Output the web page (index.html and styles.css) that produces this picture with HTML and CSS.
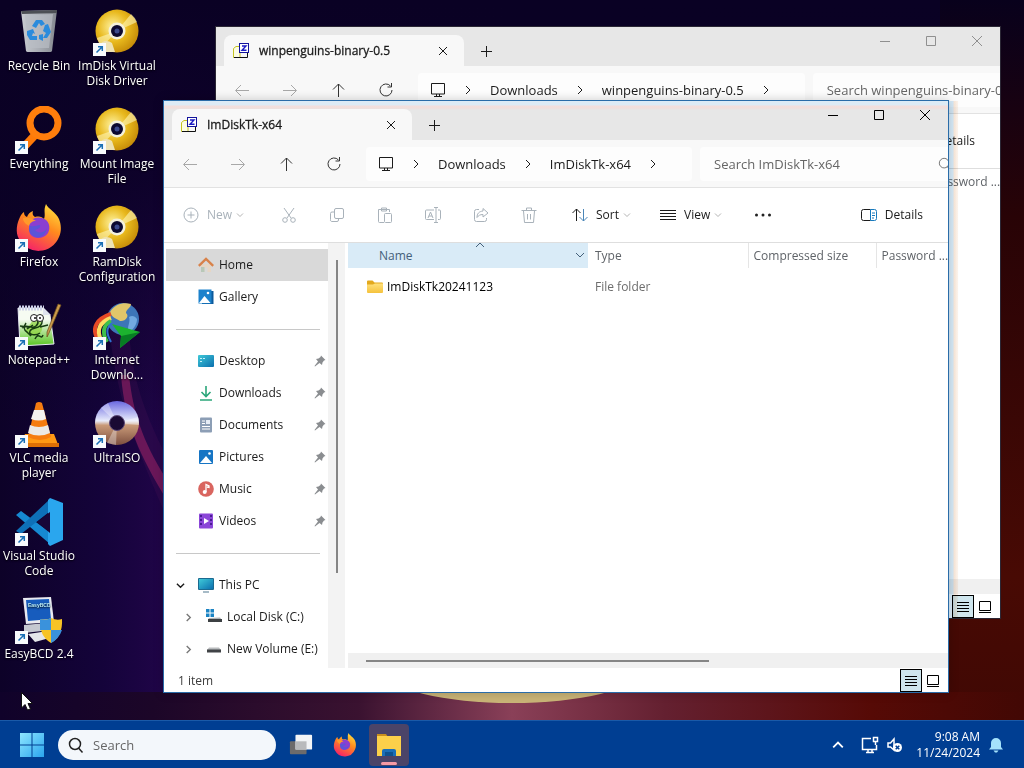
FILE: index.html
```html
<!DOCTYPE html>
<html lang="en">
<head>
    <meta charset="UTF-8">
    <meta name="viewport" content="width=device-width, initial-scale=1.0">
    <title>Desktop</title>
    <link rel="stylesheet" href="styles.css">
</head>
<body>
    <!-- Icon sprite -->
    <svg class="sprite" aria-hidden="true">
        <defs>
            <radialGradient id="gold" cx="40%" cy="40%" r="65%">
                <stop offset="0" stop-color="#fff3a0"/>
                <stop offset=".55" stop-color="#e8b81c"/>
                <stop offset="1" stop-color="#c48a08"/>
            </radialGradient>
            <linearGradient id="fire" x1=".8" y1="0" x2=".3" y2="1">
                <stop offset="0" stop-color="#ffe23e"/>
                <stop offset=".45" stop-color="#ff8a1e"/>
                <stop offset="1" stop-color="#f5206a"/>
            </linearGradient>
            <linearGradient id="silver" x1="0" y1="0" x2="0" y2="1">
                <stop offset="0" stop-color="#6a68e0"/>
                <stop offset=".45" stop-color="#e8ecfb"/>
                <stop offset=".55" stop-color="#c99a78"/>
                <stop offset="1" stop-color="#7d4f3f"/>
            </linearGradient>
            <linearGradient id="bin" x1="0" y1="0" x2="1" y2="0">
                <stop offset="0" stop-color="#c9ccd1"/>
                <stop offset=".5" stop-color="#a9adb4"/>
                <stop offset="1" stop-color="#84888f"/>
            </linearGradient>
            <linearGradient id="winlogo" x1="0" y1="0" x2="1" y2="1">
                <stop offset="0" stop-color="#8fe6ff"/>
                <stop offset="1" stop-color="#2aa5ee"/>
            </linearGradient>
            <linearGradient id="teal" x1="0" y1="0" x2="1" y2="1">
                <stop offset="0" stop-color="#3fc9d8"/>
                <stop offset="1" stop-color="#0b6fae"/>
            </linearGradient>
            <linearGradient id="folder" x1="0" y1="0" x2="0" y2="1">
                <stop offset="0" stop-color="#ffe07a"/>
                <stop offset="1" stop-color="#f5c23c"/>
            </linearGradient>
            <linearGradient id="pad" x1="0" y1="0" x2="0" y2="1">
                <stop offset=".3" stop-color="#f6fbf2"/>
                <stop offset="1" stop-color="#57c41f"/>
            </linearGradient>
        </defs>

        <symbol id="shortcut" viewBox="0 0 13 13">
            <rect width="13" height="13" fill="#f8fbfd"/>
            <path d="M3.5 9.5 9 4M5 3.7h4.3V8" fill="none" stroke="#1a6fb5" stroke-width="1.5"/>
        </symbol>
        <symbol id="recycle" viewBox="0 0 48 48">
            <path d="m6 3 36-1-5 41a2 2 0 0 1-2 1H13a2 2 0 0 1-2-1z" fill="url(#bin)"/>
            <path d="m6 3 36-1v3L7 6z" fill="#4d5055"/>
            <path d="m10 7 28-1-4 34H14z" fill="#b9bec5" opacity=".7"/>
            <g fill="#2a8bdc">
                <path d="m17 18 4-6h6l3 4-4 2-2-3-3 5z"/>
                <path d="m30 17 3-1 3 8-4 6h-4l3-5-3-2z"/>
                <path d="m12 23 6-2 2 5-2-1-1 3h5v4h-7l-3-5z"/>
                <path d="m24 27 4-1v7l-4-2z"/>
            </g>
        </symbol>
        <symbol id="golddisc" viewBox="0 0 48 48">
            <circle cx="24" cy="23" r="21.5" fill="url(#gold)"/>
            <path d="M24 23 38 6a21 21 0 0 1 6 8zM24 23 9 39a21 21 0 0 1-5-9z" fill="#fff6b8" opacity=".6"/>
            <circle cx="24" cy="23" r="8.500" fill="#f4f1dc"/>
            <circle cx="24" cy="23" r="6" fill="#0d0a30"/>
            <circle cx="24" cy="23" r="2.500" fill="#3c4a8c"/>
            <path d="M6 38c3-6 9-6 13-3l3 9H6z" fill="#eee2b4"/>
        </symbol>
        <symbol id="everything" viewBox="0 0 48 48">
            <path d="M21 28 8 42" stroke="#ff7a08" stroke-width="8"/>
            <circle cx="29" cy="17" r="14" fill="none" stroke="#ff7e0c" stroke-width="7"/>
        </symbol>
        <symbol id="firefox" viewBox="0 0 48 48">
            <path d="M5 13c1-2 2-4 4-5 0 3 1 4 3 5 1-3 3-5 6-6-1 3 0 5 2 6 5-1 7 0 9 2 2-5-1-8 2-15 2 5 10 8 13 15 2 5 3 12 0 18A22 22 0 0 1 4 35C0 28 2 19 5 13z" fill="url(#fire)"/>
            <path d="M14 21c0-6 8-9 13-7 7 2 9 9 6 15-4 6-14 7-18 1-1-3-1-6-1-9z" fill="#8a3fd0"/>
            <path d="M15 22c4 1 7-1 10-1 1 3-2 4-5 5 3 4 10 3 12-2-1 8-9 12-15 7-3-3-4-6-2-9z" fill="#5b54d8"/>
            <path d="M8 14c5-1 9 0 13 3-4 0-6 2-7 5-3-2-6-4-6-8z" fill="#ff9a2a"/>
        </symbol>
        <symbol id="notepad" viewBox="0 0 48 48">
            <path d="M3 6h25l7 7 4 29-34 2z" fill="url(#pad)" stroke="#e8ebf4"/>
            <path d="M4 6h25" stroke="#cfd4ea" stroke-width="5" stroke-dasharray="2 1"/>
            <path d="M28 5v8h8z" fill="#dfe3ee"/>
            <path d="M17 19c-2 6-8 6-6 11s12 5 15 0-1-8 0-11" fill="#8bd33a" opacity=".7"/>
            <path d="M7 26c5-5 9 2 14-2s-1-7 3-7 4 4 1 7-8 1-10 5 6 5 10 2M12 27l6-4M20 37c4-8 6 2 8-4M5 24l8 1M25 25l8-2M11 21q-4 6 1 9l4 4" fill="none" stroke="#173b12" stroke-width="1.500"/>
            <circle cx="19" cy="16" r="3.500" fill="#fff" stroke="#222"/>
            <circle cx="25" cy="16" r="3.500" fill="#fff" stroke="#222"/>
            <circle cx="20" cy="16" r="1" fill="#111"/><circle cx="25" cy="16" r="1" fill="#111"/>
            <path d="M46 3 34 31l-2 4v-5L43 2z" fill="#c99a4a" stroke="#6b4a1c" stroke-width=".7"/>
        </symbol>
        <symbol id="idm" viewBox="0 0 48 48">
            <circle cx="30" cy="17" r="16" fill="#3d75b8"/>
            <path d="M17 10c5-9 15-10 21-8 0 4-5 5-5 9 4 3-1 9-6 8-4-3-8-3-10-9z" fill="#e0c66a"/>
            <path d="M36 15c3-2 6-1 8 2 0 5-3 10-8 13-3-4 2-10 0-15z" fill="#72a9e0"/>
            <path d="M18 12C3 17-1 26 4 36" fill="none" stroke="#e84a25" stroke-width="4"/>
            <path d="M18 16C7 20 3 27 8 38" fill="none" stroke="#ffdc62" stroke-width="4"/>
            <path d="M18 19c-8 4-9 12-4 21" fill="none" stroke="#3fc04a" stroke-width="4"/>
            <path d="M19 21c-6 5-6 10-1 19" fill="none" stroke="#2f6fd0" stroke-width="2"/>
            <path d="m19 22 28 8-20 16 1-12z" fill="#1cb32f"/>
            <path d="m28 34 19-4-20 16z" fill="#077d23"/>
        </symbol>
        <symbol id="vlc" viewBox="0 0 48 48">
            <path d="M10 34h29l5 13H5z" fill="#ff9a14"/>
            <path d="M5 43h39v4H5z" fill="#dd6f05"/>
            <path d="M21 3q3-2 6 0l9 34q-11 6-23 0z" fill="#f57c10"/>
            <path d="m19 10 10 0 2 9q-7 3-15 0z" fill="#f4f2f0"/>
            <path d="m15 25q9 4 18 0l2 8q-11 5-22 0z" fill="#ece9e6"/>
        </symbol>
        <symbol id="silverdisc" viewBox="0 0 48 48">
            <circle cx="24" cy="23" r="22" fill="url(#silver)"/>
            <path d="M24 23 8 8l7-5zM24 23 45 17l1 8zM24 23 14 43l9 2z" fill="#fff" opacity=".35"/>
            <circle cx="24" cy="23" r="7.500" fill="#1a0a33" stroke="#5d4a78" stroke-width="1"/>
        </symbol>
        <symbol id="vscode" viewBox="0 0 48 48">
            <path d="m1 17 5-4 31 23-2 10z" fill="#1689d2"/>
            <path d="M1 33 35 1l3 10L6 36z" fill="#0e70b8"/>
            <path d="m35 0 13 5v37l-13 6-2-2V2z" fill="#2aa6ee"/>
            <path d="m35 14-13 10 13 11z" fill="#170638"/>
        </symbol>
        <symbol id="easybcd" viewBox="0 0 48 48">
            <path d="m8 2 28-1 3 25-28 2z" fill="#e9eaf0"/>
            <path d="m11 4 23-1 2 20-23 2z" fill="#175cbd"/>
            <text x="13" y="11" font-family="Liberation Sans, sans-serif" font-size="5" font-weight="700" fill="#bff0f5">EasyBCD</text>
            <path d="m9 29 23-2 4 7-27 3z" fill="#c5c8d0"/>
            <path d="m13 38 20-3 5 6-18 5z" fill="#e5e6ea"/>
            <path d="M36 22q6 3 11 1 1 17-11 24-12-7-11-24 6 2 11-1z" fill="#f7c325"/>
            <path d="M36 22q-5 3-11 1v11h11zM36 34h11q-3 9-11 13z" fill="#3a92dc"/>
        </symbol>

        <symbol id="tabicon" viewBox="0 0 16 16">
            <path d="M.5 5.500 3 3.500h4v11H.5z" fill="#fdfde4" stroke="#c4c422"/>
            <path d="M1 14.500h13.500V10" fill="none" stroke="#111"/>
            <rect x="6.500" y=".5" width="9" height="9" fill="#fff" stroke="#14149c"/>
            <path d="M9 3h4L9 7.300h4.500" fill="none" stroke="#1c1cc4" stroke-width="1.400"/>
        </symbol>
        <symbol id="close" viewBox="0 0 12 12"><path d="m1 1 10 10M11 1 1 11"/></symbol>
        <symbol id="tabclose" viewBox="0 0 12 12"><path d="m2 2 8 8M10 2l-8 8"/></symbol>
        <symbol id="plus" viewBox="0 0 12 12"><path d="M6.500 1v11M1 6.500h11"/></symbol>
        <symbol id="min" viewBox="0 0 12 12"><path d="M1 6.500h10"/></symbol>
        <symbol id="max" viewBox="0 0 12 12"><path d="M1.500 1.500h9v9h-9z"/></symbol>
        <symbol id="back" viewBox="0 0 16 16"><path d="M15 8.500H2m5-5.500L1.500 8.500 7 14"/></symbol>
        <symbol id="forward" viewBox="0 0 16 16"><path d="M1 8.500h13M9 3l5.500 5.500L9 14"/></symbol>
        <symbol id="up" viewBox="0 0 16 16"><path d="M8.500 15V2M3 7.500 8.500 2 14 7.500"/></symbol>
        <symbol id="refresh" viewBox="0 0 16 16"><path d="M12.500 4A6 6 0 1 0 14 8M13.500 1v4h-4"/></symbol>
        <symbol id="monitor" viewBox="0 0 16 16"><path d="M1.500 1.500h13v10.500h-13zM4 14.500h8M6.500 12v2m3-2v2"/></symbol>
        <symbol id="right" viewBox="0 0 8 10"><path d="m2 1 4 4-4 4"/></symbol>
        <symbol id="down" viewBox="0 0 10 8"><path d="m1 2 4 4 4-4"/></symbol>
        <symbol id="upchev" viewBox="0 0 10 8"><path d="m1 6 4-4 4 4"/></symbol>
        <symbol id="search" viewBox="0 0 16 16"><path d="m10.500 11 4 4.500"/><circle cx="7" cy="7" r="5.500"/></symbol>
        <symbol id="new" viewBox="0 0 16 16"><circle cx="8" cy="8" r="7"/><path d="M8 4.500v7M4.500 8h7"/></symbol>
        <symbol id="cut" viewBox="0 0 16 16"><path d="m3 1 7 10M13 1 6 11"/><circle cx="4" cy="13" r="2.300"/><circle cx="12" cy="13" r="2.300"/></symbol>
        <symbol id="copy" viewBox="0 0 16 16"><rect x="5.500" y="1.500" width="9" height="10" rx="1.500"/><path d="M5 5H3a1.500 1.500 0 0 0-1.500 1.500v6A1.500 1.500 0 0 0 3 14.500h5A1.500 1.500 0 0 0 9.500 13v-1"/></symbol>
        <symbol id="paste" viewBox="0 0 16 16"><path d="M7 15.500H2.500a1 1 0 0 1-1-1v-12h11V5M4.500 4V1h5v3z"/><rect x="7.500" y="6.500" width="7" height="9" rx="1"/></symbol>
        <symbol id="rename" viewBox="0 0 16 16"><path d="M9 3H1.500A1 1 0 0 0 .5 4v7.500a1 1 0 0 0 1 1H9M13 3h1.500a1 1 0 0 1 1 1v7.500a1 1 0 0 1-1 1H13M11 .5v15M9 .5h4M9 15.500h4M3 11l2.500-6L8 11M4 9h3"/></symbol>
        <symbol id="share" viewBox="0 0 16 16"><path d="M6 2.500H3.500a2 2 0 0 0-2 2v8a2 2 0 0 0 2 2h8a2 2 0 0 0 2-2V11M10 1.500 15 6l-5 4V7.500c-3 0-4.500 1-6 3 0-4 2-6 6-6.500z"/></symbol>
        <symbol id="trash" viewBox="0 0 16 16"><path d="M.5 3.500h15M5.500 3V1h5v2M2.500 4l1 11.500h9l1-11.500M6.500 7v5.500M9.500 7v5.500"/></symbol>
        <symbol id="sort" viewBox="0 0 16 16"><path d="M4.500 14V2M.5 6l4-4 4 4"/><path d="M11.500 2v12m-4-4 4 4 4-4" stroke="#4a86b8"/></symbol>
        <symbol id="lines" viewBox="0 0 16 16"><path d="M0 3.500h16M0 6.500h16M0 9.500h16M0 12.500h16"/></symbol>
        <symbol id="listview" viewBox="0 0 14 14"><path d="M1 2.500h12M1 5.500h12M1 8.500h12M1 11.500h12"/></symbol>
        <symbol id="dots" viewBox="0 0 18 6"><g fill="#222" stroke="none"><circle cx="2.500" cy="3" r="1.500"/><circle cx="9" cy="3" r="1.500"/><circle cx="15.500" cy="3" r="1.500"/></g></symbol>
        <symbol id="details" viewBox="0 0 16 16"><path d="M9.500 2.500h-7a2 2 0 0 0-2 2v7a2 2 0 0 0 2 2h7"/><path d="M9.500 2.500h4a2 2 0 0 1 2 2v7a2 2 0 0 1-2 2h-4zM11 6h3M11 8.500h3M11 11h2" stroke="#1679bd"/></symbol>
        <symbol id="thumbs" viewBox="0 0 14 14"><path d="M1.500 1.500h11v9h-11zM1 12.500h12"/></symbol>

        <symbol id="home" viewBox="0 0 16 16"><path d="M3 7h10v8H9.500v-4.500h-3V15H3z" fill="#e6d6c4"/><path d="M3 10h3.500v5H3z" fill="#b8c8b8"/><path d="M.8 8.800 8 2l7.200 6.800" fill="none" stroke="#d8824a" stroke-width="2.400"/></symbol>
        <symbol id="gallery" viewBox="0 0 16 16"><path d="M4 2h11.500v13H4z" fill="#0c5a9c"/><path d="M.5.5h13v14H.5z" fill="#1c82cc"/><path d="m1 14 5.500-7 6 7z" fill="#fff"/><circle cx="10" cy="4" r="1.300" fill="#fff"/></symbol>
        <symbol id="desk" viewBox="0 0 16 16"><rect y="2" width="16" height="12" rx="1" fill="url(#teal)"/><path d="M2 5h2v1H2zM2 8h2v1H2zM5 5h2v1H5z" fill="#c4f2fa"/></symbol>
        <symbol id="download" viewBox="0 0 16 16"><path d="M8 1v10M3.500 7 8 11.500 12.500 7M2 15h12" fill="none" stroke="#2ba67a" stroke-width="1.600"/></symbol>
        <symbol id="docs" viewBox="0 0 16 16"><rect x="2" y=".5" width="12" height="15" rx="1" fill="#8c9eb5"/><path d="M4 4h3M4 6.500h3M4 9.500h8M4 12h8" stroke="#fff" /><path d="M8 3h4v4H8z" fill="#e6edf6"/></symbol>
        <symbol id="pics" viewBox="0 0 16 16"><rect x="1" y="1" width="14" height="14" rx="1" fill="#1675c4"/><path d="m2 14 6-7 6 7z" fill="#fff"/><circle cx="11.500" cy="4.500" r="1.300" fill="#fff"/></symbol>
        <symbol id="music" viewBox="0 0 16 16"><circle cx="8" cy="8" r="7.800" fill="#d9655f"/><path d="M8 11V3.500l3 1.500v1.500L9 6" fill="none" stroke="#fff" stroke-width="1.300"/><circle cx="6.700" cy="11" r="2" fill="#fff"/></symbol>
        <symbol id="video" viewBox="0 0 16 16"><rect x="1" y=".5" width="14" height="15" rx="1" fill="#8b46d8"/><path d="M3 2v12M13 2v12" stroke="#4a1c94" stroke-width="2" stroke-dasharray="2"/><path d="m6 5 5 3-5 3z" fill="#fff"/></symbol>
        <symbol id="pc" viewBox="0 0 16 16"><rect y="1" width="16" height="12" rx="1" fill="#1b6a90"/><rect x="1" y="2" width="14" height="10" fill="url(#teal)"/><path d="M5 15h6" stroke="#8aa4b4" stroke-width="1.500"/></symbol>
        <symbol id="cdrive" viewBox="0 0 16 16"><path d="M0 0h3.500v3.500H0zM4.500 0H8v3.500H4.500zM0 4.500h3.500V8H0zM4.500 4.500H8V8H4.500z" fill="#1b84c4"/><path d="m3 9 11-.5 1.500 2H2z" fill="#aeb2b5"/><rect x="2" y="10" width="14" height="3" fill="#3c4043"/></symbol>
        <symbol id="drive" viewBox="0 0 16 16"><path d="M3 6.500h10L15 9H1z" fill="#b9bcbe"/><rect x="1" y="8.500" width="14" height="3" fill="#404346"/></symbol>
        <symbol id="foldericon" viewBox="0 0 16 16"><path d="M0 2.500A1 1 0 0 1 1 1.500h4.500l2 2H15a1 1 0 0 1 1 1V7H0z" fill="#e3a91d"/><path d="M0 5.500h6l2-1h8v8.500a1 1 0 0 1-1 1H1a1 1 0 0 1-1-1z" fill="url(#folder)"/></symbol>
        <symbol id="pin" viewBox="0 0 12 12"><path d="m7 .5 4.500 4.500-1.500.5-1.500 2L8 10 5.500 8 1 11.500.500 11 4 6.500 2 4l2.500-.500 2-1.500z" fill="#8a8d90"/></symbol>

        <symbol id="start" viewBox="0 0 24 24"><path d="M0 0h11.500v11.500H0zM12.500 0H24v11.500H12.500zM0 12.500h11.500V24H0zM12.500 12.500H24V24H12.500z" fill="url(#winlogo)"/></symbol>
        <symbol id="taskview" viewBox="0 0 26 24"><rect x="1" y="8" width="18" height="14" rx="1" fill="#6d6b6b"/><rect x="7" y="1" width="18" height="16" rx="1" fill="#f2f4f6"/><rect x="7" y="8" width="12" height="9" fill="#b9babc"/></symbol>
        <symbol id="explorer" viewBox="0 0 26 24"><path d="M1 1h9l2 3h-11z" fill="#c98f1e"/><path d="M1 3h24v20H1z" fill="#fcd04a"/><path d="M6 23v-5q0-2 2-2h10q2 0 2 2v5z" fill="#1b6fb8"/><path d="M9 19h8v4H9z" fill="#0f528e"/></symbol>
        <symbol id="net" viewBox="0 0 18 18"><path d="M10 2.500H1.500v11h14V9M5 16.500h8M7 14v2m4-2v2M12.500 1.500h4v4h-4zM14.500 6v3"/></symbol>
        <symbol id="mute" viewBox="0 0 16 16"><path d="M1 6v4h2.500L7 13V2L3.500 6z"/><circle cx="10.500" cy="10.500" r="4.500" fill="#fff" stroke="none"/><path d="m8.700 8.700 3.600 3.600m0-3.600-3.600 3.600" stroke="#003e92"/></symbol>
        <symbol id="bell" viewBox="0 0 16 16"><path d="M8 1a5 5 0 0 1 5 5v4l2 2.500H1L3 10V6a5 5 0 0 1 5-5zM5.500 13.500h5L9 15.500H7z" fill="#a4e2fb"/></symbol>
    </svg>

    <main class="desktop">
        <svg class="wallpaper" viewBox="0 0 1024 720" preserveAspectRatio="none" aria-hidden="true">
            <defs>
                <linearGradient id="sky" x1="0" y1="0" x2="1" y2="0">
                    <stop offset="0" stop-color="#0d0228"/>
                    <stop offset=".1" stop-color="#14033a"/>
                    <stop offset=".16" stop-color="#200548"/>
                    <stop offset=".5" stop-color="#0a0126"/>
                    <stop offset="1" stop-color="#06011c"/>
                </linearGradient>
                <linearGradient id="dusk" x1="0" y1="0" x2="0" y2="1">
                    <stop offset="0" stop-color="#08011c"/>
                    <stop offset=".3" stop-color="#280306"/>
                    <stop offset=".8" stop-color="#480a04"/>
                    <stop offset="1" stop-color="#400804"/>
                </linearGradient>
                <linearGradient id="shade" x1="0" y1="0" x2="0" y2="1">
                    <stop offset="0" stop-color="#0a0124"/>
                    <stop offset=".25" stop-color="#0a0124" stop-opacity=".8"/>
                    <stop offset=".6" stop-color="#0a0124" stop-opacity="0"/>
                </linearGradient>
                <linearGradient id="glow" x1="0" y1="0" x2="1" y2="0">
                    <stop offset="0" stop-color="#10022a"/>
                    <stop offset=".15" stop-color="#1c0628"/>
                    <stop offset=".35" stop-color="#3a1230"/>
                    <stop offset=".5" stop-color="#8a4058"/>
                    <stop offset=".65" stop-color="#642030"/>
                    <stop offset=".85" stop-color="#560a06"/>
                    <stop offset="1" stop-color="#420804"/>
                </linearGradient>
            </defs>
            <rect width="1024" height="720" fill="url(#sky)"/>
            <path d="M0 0h1024v720H0z" fill="url(#shade)"/>
            <path d="M940 0h84v720h-84z" fill="url(#dusk)"/>
            <path d="M108 310c4 70 20 120 60 210v-60c-30-60-38-92-40-150z" fill="#4a1258" opacity=".25"/>
            <path d="M121 375c4 50 20 82 44 122v-20c-22-36-32-64-36-102z" fill="#7a1c5c" opacity=".8"/>
            <path d="M0 692h1024v28H0z" fill="url(#glow)"/>
            <ellipse cx="512" cy="672" rx="125" ry="31" fill="#c9b477"/>
        </svg>

        <ul class="shortcuts">
            <li><a href="#"><svg class="art"><use href="#recycle"/></svg>Recycle Bin</a></li>
            <li><a href="#"><svg class="art"><use href="#everything"/></svg><svg class="arrow"><use href="#shortcut"/></svg>Everything</a></li>
            <li><a href="#"><svg class="art"><use href="#firefox"/></svg><svg class="arrow"><use href="#shortcut"/></svg>Firefox</a></li>
            <li><a href="#"><svg class="art"><use href="#notepad"/></svg><svg class="arrow"><use href="#shortcut"/></svg>Notepad++</a></li>
            <li><a href="#"><svg class="art"><use href="#vlc"/></svg><svg class="arrow"><use href="#shortcut"/></svg>VLC media<br>player</a></li>
            <li><a href="#"><svg class="art"><use href="#vscode"/></svg><svg class="arrow"><use href="#shortcut"/></svg>Visual Studio<br>Code</a></li>
            <li><a href="#"><svg class="art"><use href="#easybcd"/></svg><svg class="arrow"><use href="#shortcut"/></svg>EasyBCD 2.4</a></li>
            <li><a href="#"><svg class="art"><use href="#golddisc"/></svg><svg class="arrow"><use href="#shortcut"/></svg>ImDisk Virtual<br>Disk Driver</a></li>
            <li><a href="#"><svg class="art"><use href="#golddisc"/></svg><svg class="arrow"><use href="#shortcut"/></svg>Mount Image<br>File</a></li>
            <li><a href="#"><svg class="art"><use href="#golddisc"/></svg><svg class="arrow"><use href="#shortcut"/></svg>RamDisk<br>Configuration</a></li>
            <li><a href="#"><svg class="art"><use href="#idm"/></svg><svg class="arrow"><use href="#shortcut"/></svg>Internet<br>Downlo...</a></li>
            <li><a href="#"><svg class="art"><use href="#silverdisc"/></svg><svg class="arrow"><use href="#shortcut"/></svg>UltraISO</a></li>
        </ul>

        <!-- Background window -->
        <section class="window window-back">
            <header class="titlebar">
                <div class="tab"><svg class="i16"><use href="#tabicon"/></svg><span>winpenguins-binary-0.5</span><button aria-label="Close tab"><svg class="i12 line"><use href="#tabclose"/></svg></button></div>
                <button class="new-tab" aria-label="New tab"><svg class="i12 line"><use href="#plus"/></svg></button>
                <div class="controls">
                    <button aria-label="Minimize"><svg class="i12 line"><use href="#min"/></svg></button>
                    <button aria-label="Maximize"><svg class="i12 line"><use href="#max"/></svg></button>
                    <button aria-label="Close"><svg class="i12 line"><use href="#close"/></svg></button>
                </div>
            </header>
            <nav class="navbar">
                <button disabled aria-label="Back"><svg class="i16 line"><use href="#back"/></svg></button>
                <button disabled aria-label="Forward"><svg class="i16 line"><use href="#forward"/></svg></button>
                <button aria-label="Up"><svg class="i16 line"><use href="#up"/></svg></button>
                <button aria-label="Refresh"><svg class="i16 line"><use href="#refresh"/></svg></button>
                <div class="address">
                    <svg class="i16 line"><use href="#monitor"/></svg>
                    <svg class="sep line"><use href="#right"/></svg>
                    <a href="#">Downloads</a>
                    <svg class="sep line"><use href="#right"/></svg>
                    <a href="#">winpenguins-binary-0.5</a>
                    <svg class="sep line"><use href="#right"/></svg>
                </div>
                <div class="search-box"><input type="text" aria-label="Search folder" placeholder="Search winpenguins-binary-0.5"></div>
            </nav>
            <div class="toolbar">
                <button class="btn-details"><svg class="i16 line"><use href="#details"/></svg>Details</button>
            </div>
            <div class="content">
                <div class="files">
                    <table>
                        <thead><tr><th class="col-name"></th><th class="col-type"></th><th class="col-size"></th><th class="col-pass">Password ...</th></tr></thead>
                    </table>
                    <div class="hscroll"></div>
                </div>
            </div>
            <footer class="status">
                <span></span>
                <button class="active" aria-label="Details view"><svg class="i14 line"><use href="#listview"/></svg></button>
                <button aria-label="Thumbnail view"><svg class="i14 line"><use href="#thumbs"/></svg></button>
            </footer>
        </section>

        <!-- Active window -->
        <section class="window window-front">
            <header class="titlebar">
                <div class="tab"><svg class="i16"><use href="#tabicon"/></svg><span>ImDiskTk-x64</span><button aria-label="Close tab"><svg class="i12 line"><use href="#tabclose"/></svg></button></div>
                <button class="new-tab" aria-label="New tab"><svg class="i12 line"><use href="#plus"/></svg></button>
                <div class="controls">
                    <button aria-label="Minimize"><svg class="i12 line"><use href="#min"/></svg></button>
                    <button aria-label="Maximize"><svg class="i12 line"><use href="#max"/></svg></button>
                    <button aria-label="Close"><svg class="i12 line"><use href="#close"/></svg></button>
                </div>
            </header>
            <nav class="navbar">
                <button disabled aria-label="Back"><svg class="i16 line"><use href="#back"/></svg></button>
                <button disabled aria-label="Forward"><svg class="i16 line"><use href="#forward"/></svg></button>
                <button aria-label="Up"><svg class="i16 line"><use href="#up"/></svg></button>
                <button aria-label="Refresh"><svg class="i16 line"><use href="#refresh"/></svg></button>
                <div class="address">
                    <svg class="i16 line"><use href="#monitor"/></svg>
                    <svg class="sep line"><use href="#right"/></svg>
                    <a href="#">Downloads</a>
                    <svg class="sep line"><use href="#right"/></svg>
                    <a href="#">ImDiskTk-x64</a>
                    <svg class="sep line"><use href="#right"/></svg>
                </div>
                <div class="search-box"><input type="text" aria-label="Search folder" placeholder="Search ImDiskTk-x64"><svg class="i14 line"><use href="#search"/></svg></div>
            </nav>
            <div class="toolbar">
                <button class="btn-new" disabled><svg class="i16 line"><use href="#new"/></svg>New<svg class="caret line"><use href="#down"/></svg></button>
                <button class="btn-icon" disabled aria-label="Cut"><svg class="i16 line"><use href="#cut"/></svg></button>
                <button class="btn-icon" disabled aria-label="Copy"><svg class="i16 line"><use href="#copy"/></svg></button>
                <button class="btn-icon" disabled aria-label="Paste"><svg class="i16 line"><use href="#paste"/></svg></button>
                <button class="btn-icon" disabled aria-label="Rename"><svg class="i16 line"><use href="#rename"/></svg></button>
                <button class="btn-icon" disabled aria-label="Share"><svg class="i16 line"><use href="#share"/></svg></button>
                <button class="btn-icon" disabled aria-label="Delete"><svg class="i16 line"><use href="#trash"/></svg></button>
                <button class="btn-menu"><svg class="i16 line"><use href="#sort"/></svg>Sort<svg class="caret line"><use href="#down"/></svg></button>
                <button class="btn-menu"><svg class="i16 line"><use href="#lines"/></svg>View<svg class="caret line"><use href="#down"/></svg></button>
                <button class="btn-more" aria-label="See more"><svg class="dots"><use href="#dots"/></svg></button>
                <button class="btn-details"><svg class="i16 line"><use href="#details"/></svg>Details</button>
            </div>
            <div class="content">
                <aside class="sidebar">
                    <ul>
                        <li class="selected"><a href="#"><svg class="i16"><use href="#home"/></svg>Home</a></li>
                        <li><a href="#"><svg class="i16"><use href="#gallery"/></svg>Gallery</a></li>
                        <li class="divider"></li>
                        <li><a href="#"><svg class="i16"><use href="#desk"/></svg>Desktop</a><svg class="pin"><use href="#pin"/></svg></li>
                        <li><a href="#"><svg class="i16"><use href="#download"/></svg>Downloads</a><svg class="pin"><use href="#pin"/></svg></li>
                        <li><a href="#"><svg class="i16"><use href="#docs"/></svg>Documents</a><svg class="pin"><use href="#pin"/></svg></li>
                        <li><a href="#"><svg class="i16"><use href="#pics"/></svg>Pictures</a><svg class="pin"><use href="#pin"/></svg></li>
                        <li><a href="#"><svg class="i16"><use href="#music"/></svg>Music</a><svg class="pin"><use href="#pin"/></svg></li>
                        <li><a href="#"><svg class="i16"><use href="#video"/></svg>Videos</a><svg class="pin"><use href="#pin"/></svg></li>
                        <li class="divider"></li>
                        <li class="tree"><svg class="expand line"><use href="#down"/></svg><a href="#"><svg class="i16"><use href="#pc"/></svg>This PC</a></li>
                        <li class="tree child"><svg class="expand line"><use href="#right"/></svg><a href="#"><svg class="i16"><use href="#cdrive"/></svg>Local Disk (C:)</a></li>
                        <li class="tree child"><svg class="expand line"><use href="#right"/></svg><a href="#"><svg class="i16"><use href="#drive"/></svg>New Volume (E:)</a></li>
                    </ul>
                </aside>
                <div class="vscroll"><div class="thumb"></div></div>
                <div class="files">
                    <table>
                        <thead>
                            <tr>
                                <th class="col-name sorted">Name<svg class="sort-mark line"><use href="#upchev"/></svg><svg class="filter line"><use href="#down"/></svg></th>
                                <th class="col-type">Type</th>
                                <th class="col-size">Compressed size</th>
                                <th class="col-pass">Password ...</th>
                            </tr>
                        </thead>
                        <tbody>
                            <tr>
                                <td><a href="#"><svg class="i16"><use href="#foldericon"/></svg>ImDiskTk20241123</a></td>
                                <td class="muted">File folder</td>
                                <td></td>
                                <td></td>
                            </tr>
                        </tbody>
                    </table>
                    <div class="hscroll"><div class="thumb"></div></div>
                </div>
            </div>
            <footer class="status">
                <span>1 item</span>
                <button class="active" aria-label="Details view"><svg class="i14 line"><use href="#listview"/></svg></button>
                <button aria-label="Thumbnail view"><svg class="i14 line"><use href="#thumbs"/></svg></button>
            </footer>
        </section>

        <svg class="cursor" viewBox="0 0 12 19"><path d="M.5.5v15.500l3.500-3.500L6.500 18l3-1-2.500-5.500h4.500z" fill="#fff" stroke="#111"/></svg>
    </main>

    <footer class="taskbar">
        <button aria-label="Start"><svg class="i24"><use href="#start"/></svg></button>
        <div class="task-search">
            <svg class="i16 line"><use href="#search"/></svg>
            <input type="text" aria-label="Search" placeholder="Search">
        </div>
        <button class="task" aria-label="Task view"><svg class="i24"><use href="#taskview"/></svg></button>
        <button class="task" aria-label="Firefox"><svg class="i24"><use href="#firefox"/></svg></button>
        <button class="task running" aria-label="File Explorer"><svg class="i26"><use href="#explorer"/></svg></button>
        <div class="tray">
            <button aria-label="Hidden icons"><svg class="i12 line"><use href="#upchev"/></svg></button>
            <button aria-label="Network"><svg class="i18 line"><use href="#net"/></svg></button>
            <button aria-label="Volume"><svg class="i16 line"><use href="#mute"/></svg></button>
            <div class="clock">9:08 AM<br>11/24/2024</div>
            <button aria-label="Notifications"><svg class="i16"><use href="#bell"/></svg></button>
        </div>
    </footer>
</body>
</html>
```
FILE: styles.css
```css
* {
    margin: 0;
    padding: 0;
    box-sizing: border-box;
}

body {
    display: flex;
    flex-direction: column;
    height: 100vh;
    overflow: hidden;
    font-family: "Open Sans", "Noto Sans", sans-serif;
    font-size: 12px;
    line-height: 16px;
    color: #1b1b1b;
    background-color: #0d0228;
}

button, input {
    font: inherit;
    color: inherit;
    border: none;
    background: none;
    outline: none;
}

button {
    display: flex;
    align-items: center;
    justify-content: center;
}

a {
    color: inherit;
    text-decoration: none;
}

ul {
    list-style: none;
}

svg {
    display: block;
    flex: none;
}

.sprite {
    position: absolute;
    width: 0;
    height: 0;
}

.i12 { width: 12px; height: 12px; }
.i14 { width: 14px; height: 14px; }
.i16 { width: 16px; height: 16px; }
.i18 { width: 18px; height: 18px; }
.i24 { width: 24px; height: 24px; }
.i26 { width: 26px; height: 26px; }

.line {
    fill: none;
    stroke: currentColor;
    stroke-width: 1;
}

/* Desktop */
.desktop {
    position: relative;
    flex: 1;
    overflow: hidden;
}

.wallpaper {
    position: absolute;
    width: 100%;
    height: 100%;
}

.shortcuts {
    position: relative;
    display: grid;
    grid-auto-flow: column;
    grid-template-rows: repeat(7, 98px);
    grid-auto-columns: 78px;
}

.shortcuts a {
    position: relative;
    display: block;
    padding-top: 8px;
    color: #fff;
    line-height: 15px;
    text-align: center;
    white-space: nowrap;
    text-shadow: 0 1px 2px #000;
}

.shortcuts .art {
    width: 48px;
    height: 48px;
    margin: 0 auto 2px;
}

.shortcuts .arrow {
    position: absolute;
    top: 43px;
    left: 15px;
    width: 13px;
    height: 13px;
}

.cursor {
    position: absolute;
    top: 692px;
    left: 21px;
    width: 12px;
    height: 19px;
}

/* Windows */
.window {
    position: absolute;
    display: flex;
    flex-direction: column;
    width: 786px;
    height: 593px;
    border: 1px solid #2b2735;
    background-color: #fff;
    overflow: hidden;
}

.window-back {
    top: 26px;
    left: 215px;
}

.window-front {
    top: 100px;
    left: 163px;
    border-color: #2a6ca8;
    box-shadow: 0 0 10px rgba(0, 0, 0, 0.2);
}

/* light spilling from the active window */
.window-back::after {
    content: "";
    position: absolute;
    top: 74px;
    right: 42px;
    bottom: 0;
    width: 9px;
    background: linear-gradient(to right, #d8ecfa 4px, #fbeadc 5px, #fdf5ee);
    mix-blend-mode: multiply;
}

.titlebar {
    display: flex;
    height: 39px;
    padding-left: 8px;
    background-color: #e7e7e7;
}

.window-front .titlebar {
    background: linear-gradient(#ddebf5 4px, #f3dedb 5px, #f0dfdc 7px, #e7e7e7 9px);
}

.tab {
    display: flex;
    align-items: center;
    width: 240px;
    height: 31px;
    margin-top: 8px;
    padding: 0 9px;
    border-radius: 8px 8px 0 0;
    background-color: #f8f8f8;
}

.tab span {
    flex: 1;
    margin-left: 10px;
    -webkit-text-stroke: 0.3px #1b1b1b;
}

.tab button {
    width: 24px;
    height: 24px;
}

.new-tab {
    width: 44px;
    height: 31px;
    margin-top: 8px;
}

.controls {
    display: flex;
    margin-left: auto;
}

.controls button {
    width: 46px;
    height: 28px;
}

.window-front .controls {
    color: #000;
}

.window-back .controls {
    color: #8f8f8f;
}

.navbar {
    display: flex;
    align-items: center;
    height: 48px;
    padding-left: 2px;
    border-bottom: 1px solid #e2e2e2;
    background-color: #f8f8f8;
    font-size: 13px;
}

.navbar > button {
    flex: none;
    width: 48px;
    height: 32px;
    color: #333;
}

.navbar button:disabled {
    color: #a8a8a8;
}

.address {
    display: flex;
    align-items: center;
    flex: none;
    height: 34px;
    margin-left: 8px;
    padding: 0 17px 0 12px;
    border-radius: 4px;
    background-color: #fdfdfd;
    white-space: nowrap;
}

.sep {
    width: 8px;
    height: 10px;
    margin: 0 18px;
}

.search-box {
    display: flex;
    align-items: center;
    flex: none;
    width: 256px;
    height: 34px;
    margin-left: 8px;
    padding-left: 14px;
    border-radius: 4px;
    background-color: #fdfdfd;
    color: #666;
}

.search-box input {
    width: 224px;
}

input::placeholder {
    color: #666;
    opacity: 1;
}

.toolbar {
    display: flex;
    align-items: center;
    height: 55px;
    border-bottom: 1px solid #dedede;
}

.toolbar button {
    height: 40px;
    gap: 8px;
}

.toolbar button:disabled {
    color: #a9b2ba;
}

.btn-new, .btn-menu {
    justify-content: flex-start;
    padding-left: 19px;
}

.btn-new {
    width: 101px;
}

.btn-icon {
    width: 48px;
}

.btn-menu {
    width: 88px;
}

.btn-more {
    width: 68px;
}

.toolbar .caret {
    width: 8px;
    height: 6px;
    margin-left: -4px;
    color: #999;
}

.dots {
    width: 18px;
    height: 6px;
}

.btn-details {
    margin-left: auto;
    padding-right: 25px;
}

.content {
    display: flex;
    flex: 1;
    min-height: 0;
}

/* Sidebar */
.sidebar {
    width: 164px;
    padding: 6px 0 0 2px;
}

.sidebar li {
    display: flex;
    align-items: center;
    height: 32px;
    padding: 0 2px 0 32px;
}

.sidebar li.selected {
    background-color: #d9d9d9;
}

.sidebar li a {
    display: flex;
    align-items: center;
    flex: 1;
    gap: 5px;
    white-space: nowrap;
}

.sidebar li.divider::before {
    content: "";
    flex: 1;
    height: 1px;
    margin: 0 6px 0 -22px;
    background-color: #c8c8c8;
}

.sidebar li.tree {
    padding: 0 0 0 10px;
    gap: 13px;
}

.sidebar li.child {
    padding-left: 18px;
}

.expand {
    width: 9px;
    height: 9px;
    stroke-width: 1.5;
}

.child .expand {
    color: #777;
}

.pin {
    width: 12px;
    height: 12px;
}

.vscroll {
    width: 17px;
    padding: 17px 0 95px 8px;
    background-color: #f3f3f3;
}

.vscroll .thumb {
    width: 2px;
    height: 100%;
    background-color: #858585;
}

/* File list */
.files {
    display: flex;
    flex-direction: column;
    justify-content: space-between;
    flex: 1;
    min-width: 0;
    padding-left: 3px;
}

.window-back .files {
    margin-left: 181px;
}

table {
    width: 100%;
    table-layout: fixed;
    border-collapse: collapse;
}

th {
    position: relative;
    height: 25px;
    padding-left: 7px;
    font-weight: normal;
    text-align: left;
    color: #5f6368;
    white-space: nowrap;
}

.col-name {
    width: 240px;
    padding-left: 31px;
}

.col-type {
    width: 160px;
}

.col-size {
    width: 128px;
}

.col-size, .col-pass {
    border-left: 1px solid #e5e5e5;
    padding-left: 5px;
}

.sorted {
    background-color: #d9ebf7;
    color: #44607a;
}

.sort-mark {
    position: absolute;
    top: -2px;
    left: 127px;
    width: 10px;
    height: 8px;
}

.filter {
    position: absolute;
    top: 8px;
    right: 3px;
    width: 10px;
    height: 8px;
}

td {
    height: 38px;
    padding-left: 7px;
}

td:first-child {
    padding-left: 19px;
}

td a {
    display: flex;
    align-items: center;
    gap: 4px;
    color: #000;
}

.muted {
    color: #6d6d6d;
}

.hscroll {
    height: 15px;
    padding: 7px 239px 0 18px;
    background-color: #f0f0f0;
}

.hscroll .thumb {
    height: 2px;
    background-color: #858585;
}

/* Status bar */
.status {
    display: flex;
    align-items: center;
    height: 24px;
    padding: 1px 4px 0 14px;
    color: #3c3c3c;
}

.status span {
    flex: 1;
}

.status button {
    width: 22px;
    height: 23px;
    color: #000;
}

.status .active {
    border: 1px solid #000;
    background-color: #cfe6ee;
}

/* Taskbar */
.taskbar {
    display: flex;
    align-items: center;
    flex: none;
    height: 48px;
    padding: 0 20px;
    border-top: 1px solid #1a5aa8;
    background-color: #003e92;
    color: #fff;
}

.task-search {
    display: flex;
    align-items: center;
    gap: 9px;
    width: 218px;
    height: 30px;
    margin: 0 5px 0 14px;
    padding: 0 10px;
    border-radius: 15px;
    background-color: #f3f7fb;
    color: #222;
}

.task-search .line, .tray .line {
    stroke-width: 1.5;
}

.task-search input {
    flex: 1;
    min-width: 0;
    font-size: 13px;
}

.task {
    width: 40px;
    height: 42px;
    margin-right: 4px;
}

.running {
    position: relative;
    border-radius: 4px;
    background-color: #4b4468;
}

.running::after {
    content: "";
    position: absolute;
    bottom: 1px;
    width: 16px;
    height: 3px;
    border-radius: 2px;
    background-color: #f59aa5;
}

.tray {
    display: flex;
    align-items: center;
    gap: 8px;
    margin-left: auto;
}

.tray button:first-child {
    margin-right: 9px;
}

.tray .clock {
    margin-left: 5px;
    text-align: right;
}
```
